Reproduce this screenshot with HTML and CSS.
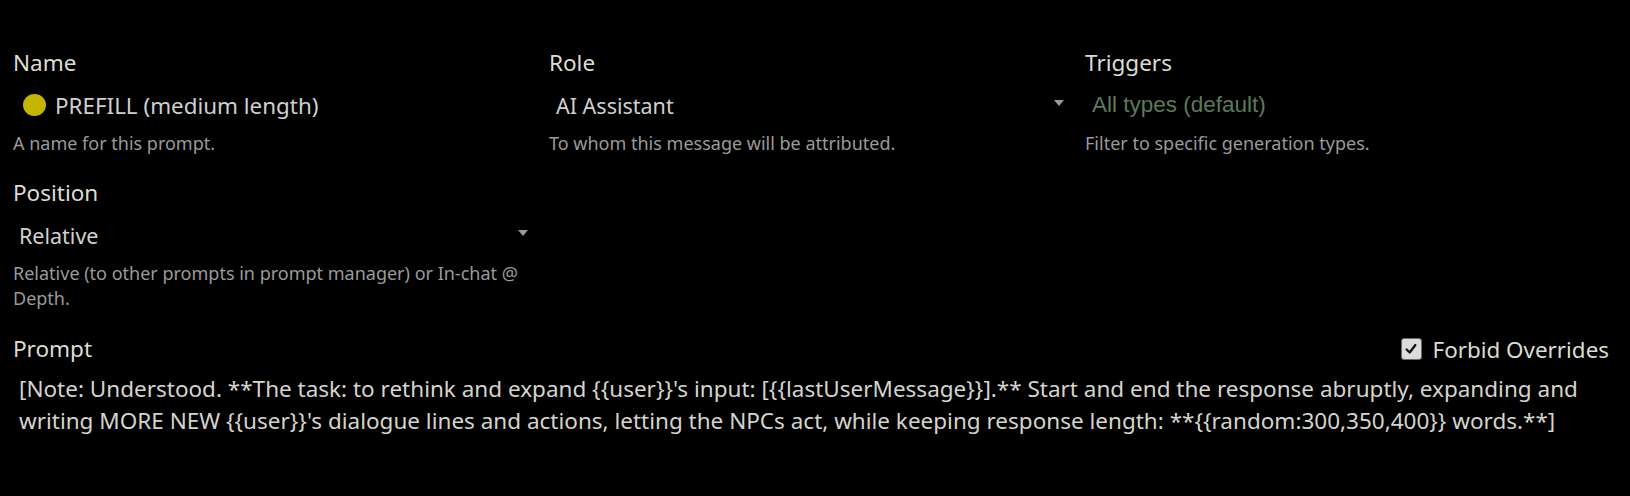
FILE: index.html
```html
<!DOCTYPE html>
<html>
<head>
<meta charset="utf-8">
<link rel="stylesheet" href="styles.css">
</head>
<body>
<div class="editor">
  <div class="row-grid">
    <div class="field">
      <div class="label">Name</div>
      <div class="name-box">
        <span class="dot"></span>
        <span class="name-text">PREFILL (medium length)</span>
      </div>
      <div class="help">A name for this prompt.</div>
    </div>
    <div class="field">
      <div class="label">Role</div>
      <div class="select">
        <span class="select-text">AI Assistant</span>
        <span class="caret"></span>
      </div>
      <div class="help">To whom this message will be attributed.</div>
    </div>
    <div class="field">
      <div class="label">Triggers</div>
      <div class="multi">
        <span class="placeholder">All types (default)</span>
      </div>
      <div class="help">Filter to specific generation types.</div>
    </div>
    <div class="field">
      <div class="label">Position</div>
      <div class="select pos">
        <span class="select-text">Relative</span>
        <span class="caret"></span>
      </div>
      <div class="help">Relative (to other prompts in prompt manager) or In-chat @ Depth.</div>
    </div>
  </div>
  <div class="prompt">
    <div class="prompt-head">
      <div class="label">Prompt</div>
      <label class="check">
        <span class="box"><svg viewBox="0 0 16 16" width="14" height="14"><path d="M3 8.5 L6.5 12 L13 3.5" fill="none" stroke="#111" stroke-width="2.6" stroke-linecap="round" stroke-linejoin="round"/></svg></span>
        <span class="check-text">Forbid Overrides</span>
      </label>
    </div>
    <div class="textarea">[Note: Understood. **The task: to rethink and expand {{user}}'s input: [{{lastUserMessage}}].** Start and end the response abruptly, expanding and writing MORE NEW {{user}}'s dialogue lines and actions, letting the NPCs act, while keeping response length: **{{random:300,350,400}} words.**]</div>
  </div>
</div>
</body>
</html>
```

FILE: styles.css
```css
html, body {
  margin: 0;
  padding: 0;
  background: #000;
}
body {
  font-family: "Noto Sans", sans-serif;
  color: #d6d6cf;
  width: 1630px;
  height: 496px;
  overflow: hidden;
}
.editor {
  padding: 49px 21px 0 13px;
}
.row-grid {
  display: grid;
  grid-template-columns: repeat(3, 516px);
  column-gap: 20px;
  row-gap: 23px;
}
.field {
  display: flex;
  flex-direction: column;
}
.label {
  font-size: 22.5px;
  line-height: 28px;
  height: 28px;
  color: #dcdcd4;
}
.name-box, .select, .multi {
  height: 44px;
  margin-top: 6px;
  display: flex;
  align-items: center;
}
.name-box {
  padding-left: 10px;
  gap: 9px;
}
.dot {
  width: 23px;
  height: 22px;
  border-radius: 50%;
  background: #c3b500;
  flex: none;
}
.name-text {
  font-size: 22.4px;
  color: #cfcfcf;
}
.select {
  padding: 0 1px 0 7px;
  justify-content: space-between;
}
.select.pos {
  padding-left: 6px;
}
.select-text {
  font-size: 21.5px;
  color: #d0d0d0;
}
.caret {
  width: 0;
  height: 0;
  margin-top: -4px;
  border-left: 5px solid transparent;
  border-right: 5px solid transparent;
  border-top: 6px solid #9a9a9a;
}
.multi {
  padding-left: 7px;
}
.placeholder {
  font-family: "Liberation Sans", Arial, sans-serif;
  font-size: 22.5px;
  color: #5b7a58;
}
.help {
  margin-top: 4px;
  font-size: 18px;
  line-height: 25px;
  color: #9a9a9a;
}
.prompt {
  margin-top: 24px;
}
.prompt-head {
  display: flex;
  justify-content: space-between;
  align-items: center;
  height: 28px;
}
.check {
  display: flex;
  align-items: center;
  gap: 11px;
}
.box {
  width: 19px;
  height: 20px;
  border: 1px solid #6a6a6a;
  border-radius: 3px;
  background: #dcdcdc;
  display: flex;
  align-items: center;
  justify-content: center;
}
.check-text {
  font-size: 22.4px;
  color: #dcdcd4;
}
.textarea {
  margin-top: 10px;
  padding: 0 6px;
  font-size: 22.5px;
  line-height: 32px;
  color: #d4d4cc;
}
```
